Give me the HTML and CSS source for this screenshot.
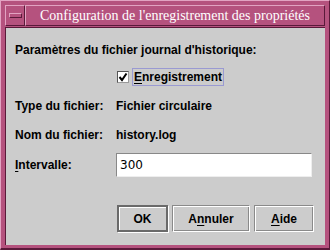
FILE: index.html
```html
<!DOCTYPE html>
<html lang="fr">
<head>
<meta charset="utf-8">
<title>Configuration</title>
<link rel="stylesheet" href="styles.css">
</head>
<body>
<div class="window">
  <div class="titlebar">
    <div class="menubtn"><span class="dash"></span></div>
    <div class="title">Configuration de l'enregistrement des propriétés</div>
  </div>
  <div class="content">
    <div class="heading">Paramètres du fichier journal d'historique:</div>
    <div class="checkrow">
      <span class="checkbox">
        <svg width="10" height="10" viewBox="0 0 10 10"><path d="M1.5 5 L4 8 L8.5 1.5" fill="none" stroke="#000" stroke-width="2"/></svg>
      </span>
      <span class="focus"><u>E</u>nregistrement</span>
    </div>
    <div class="row r-type"><span class="label">Type du fichier:</span><span class="value">Fichier circulaire</span></div>
    <div class="row r-nom"><span class="label">Nom du fichier:</span><span class="value">history.log</span></div>
    <div class="row r-int"><span class="label"><u>I</u>ntervalle:</span><span class="field">300</span></div>
    <div class="buttons">
      <span class="btn default">OK</span>
      <span class="btn wide">A<u>n</u>nuler</span>
      <span class="btn mid"><u>A</u>ide</span>
    </div>
  </div>
</div>
</body>
</html>
```
FILE: styles.css
```css
html, body { margin: 0; padding: 0; background: #cccccc; }
body { width: 330px; height: 250px; overflow: hidden; }
.window {
  box-sizing: border-box;
  width: 330px; height: 250px;
  background: #b5527e;
  border-top: 1px solid #e2a3c2;
  border-left: 1px solid #e2a3c2;
  border-right: 1px solid #5a1a3a;
  border-bottom: 2px solid #5a1a3a;
  padding: 4px 4px 3px 4px;
  display: flex; flex-direction: column;
}
.titlebar { display: flex; height: 21px; flex: none; }
.menubtn {
  box-sizing: border-box; width: 20px; height: 21px;
  border-top: 1px solid #e2a3c2; border-left: 1px solid #e2a3c2;
  border-right: 1px solid #5a1a3a; border-bottom: 1px solid #5a1a3a;
  display: flex; align-items: center; justify-content: center;
}
.dash {
  display: block; width: 11px; height: 3px;
  border-top: 1px solid #e2a3c2; border-left: 1px solid #e2a3c2;
  border-right: 1px solid #5a1a3a; border-bottom: 1px solid #5a1a3a;
}
.title {
  box-sizing: border-box; flex: 1; height: 21px;
  border-top: 1px solid #e2a3c2; border-left: 1px solid #e2a3c2;
  border-right: 1px solid #5a1a3a; border-bottom: 1px solid #5a1a3a;
  color: #fff; font-family: "Liberation Serif", serif; font-size: 14px;
  line-height: 19px; text-align: center; white-space: nowrap;
}
.content {
  flex: 1; box-sizing: border-box;
  margin-top: 1px;
  background: #cccccc;
  border-top: 1px solid #5a1a3a; border-left: 1px solid #5a1a3a;
  padding: 0 11px 0 9px;
  font-family: "Liberation Sans", Arial, sans-serif; font-weight: bold; font-size: 12px;
  color: #000;
  display: flex; flex-direction: column;
}
u { text-decoration: underline; text-underline-offset: 2px; }
.heading { margin-top: 15px; line-height: 15px; white-space: nowrap; }
.checkrow { display: flex; align-items: center; margin-top: 10px; margin-left: 102px; height: 18px; }
.checkbox {
  box-sizing: border-box; width: 12px; height: 12px; background: #fff;
  border: 1px solid #555; border-right-color: #999; border-bottom-color: #999;
  display: flex; align-items: center; justify-content: center;
}
.focus {
  box-sizing: border-box; height: 18px; margin-left: 3px; padding: 0 1px;
  border: 1px solid #9a9ad2; line-height: 16px; white-space: nowrap;
}
.row { display: flex; align-items: center; }
.label { width: 101px; flex: none; white-space: nowrap; }
.value { white-space: nowrap; }
.r-type { margin-top: 13px; line-height: 15px; }
.r-nom { margin-top: 14px; line-height: 15px; }
.r-int { margin-top: 10px; height: 24px; }
.field {
  box-sizing: border-box; width: 196px; height: 24px; background: #fff;
  border: 1px solid #888; border-right-color: #eee; border-bottom-color: #eee;
  font-weight: normal; font-family: "DejaVu Sans", sans-serif; font-size: 12px;
  line-height: 22px; padding-left: 3px;
}
.buttons { display: flex; justify-content: flex-end; gap: 4px; margin-top: 28px; }
.btn {
  box-sizing: border-box; height: 27px; display: flex; align-items: center; justify-content: center;
  border-top: 1px solid #8a8a8a; border-left: 1px solid #8a8a8a;
  border-right: 1px solid #fff; border-bottom: 1px solid #fff;
  box-shadow: inset 1px 1px 0 #fff, inset -1px -1px 0 #8a8a8a;
}
.btn.default { width: 51px; border: 2px solid #6a6a6a; box-shadow: 1px 1px 0 #fff, inset 1px 1px 0 #fff; }
.btn.wide { width: 78px; }
.btn.mid { width: 60px; }
```
